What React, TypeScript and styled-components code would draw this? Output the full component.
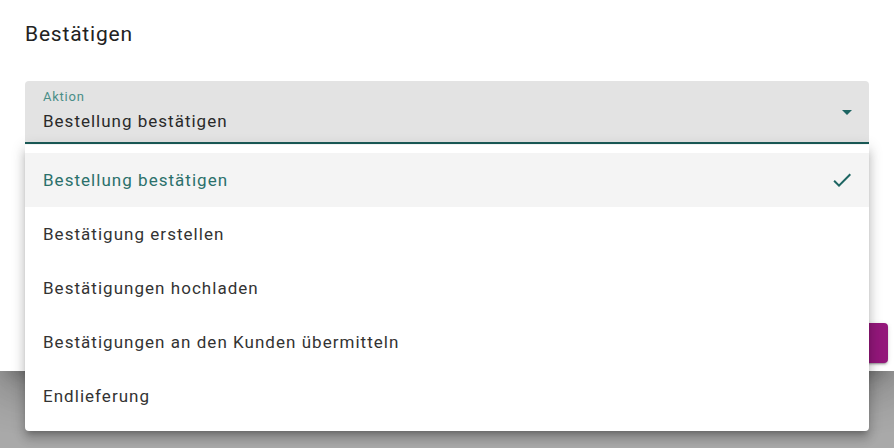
import React from "react";
import styled, { createGlobalStyle } from "styled-components";

const Global = createGlobalStyle`
  html, body { margin: 0; padding: 0; }
  body {
    width: 894px;
    height: 448px;
    overflow: hidden;
    font-family: Roboto, "Noto Sans", "Liberation Sans", sans-serif;
    background: #a9a9a9;
  }
`;

const Screen = styled.div`
  position: relative;
  width: 894px;
  height: 448px;
  background: #a9a9a9;
`;

const Dialog = styled.div`
  width: 894px;
  height: 371px;
  background: #ffffff;
  display: flex;
  flex-direction: column;
  box-sizing: border-box;
  box-shadow: 0 11px 15px -7px rgba(0,0,0,0.2), 0 24px 38px 3px rgba(0,0,0,0.14), 0 9px 46px 8px rgba(0,0,0,0.12);
`;

const Title = styled.h2`
  margin: 0;
  padding: 16px 24px 0 25px;
  font-size: 21px;
  line-height: 36px;
  font-weight: 400;
  color: #222222;
  letter-spacing: 0.8px;
`;

const Content = styled.div`
  padding: 29px 25px 0 25px;
`;

const Field = styled.div`
  position: relative;
  height: 63px;
  box-sizing: border-box;
  background: #e3e3e3;
  border-radius: 4px 4px 0 0;
  border-bottom: 2px solid #1a5b58;
  padding: 8px 18px 0 18px;
  display: flex;
  flex-direction: column;
`;

const Label = styled.span`
  font-size: 13px;
  line-height: 16px;
  color: #4a8e88;
  letter-spacing: 0.75px;
`;

const Value = styled.span`
  margin-top: 4px;
  font-size: 17px;
  line-height: 24px;
  color: #2a2a2a;
  letter-spacing: 1px;
`;

const Arrow = styled.span`
  position: absolute;
  right: 17px;
  top: 29px;
  width: 0;
  height: 0;
  border-left: 5px solid transparent;
  border-right: 5px solid transparent;
  border-top: 5px solid #1d6562;
`;

const Actions = styled.div`
  margin-top: auto;
  display: flex;
  justify-content: flex-end;
  padding: 0 6px 8px 0;
`;

const PrimaryButton = styled.button`
  width: 120px;
  height: 40px;
  border: none;
  border-radius: 4px;
  background: #93177a;
  color: #fff;
  font-family: inherit;
  box-shadow: 0 3px 1px -2px rgba(0,0,0,0.2), 0 2px 2px 0 rgba(0,0,0,0.14), 0 1px 5px 0 rgba(0,0,0,0.12);
`;

const Menu = styled.ul`
  position: absolute;
  top: 145px;
  left: 25px;
  width: 844px;
  margin: 0;
  padding: 8px 0;
  list-style: none;
  background: #ffffff;
  border-radius: 0 0 4px 4px;
  box-shadow: 0 5px 5px -3px rgba(0,0,0,0.2), 0 8px 10px 1px rgba(0,0,0,0.14), 0 3px 14px 2px rgba(0,0,0,0.12);
`;

const Item = styled.li<{ $selected?: boolean }>`
  height: 54px;
  display: flex;
  align-items: center;
  justify-content: space-between;
  padding: 0 15px 0 18px;
  font-size: 17px;
  letter-spacing: 1.03px;
  color: ${(p) => (p.$selected ? "#2b706b" : "#333333")};
  background: ${(p) => (p.$selected ? "#f4f4f4" : "transparent")};
`;

const Check = () => (
  <svg width="24" height="24" viewBox="0 0 24 24" aria-hidden="true">
    <path d="M9 16.17L4.83 12l-1.42 1.41L9 19 21 7l-1.41-1.41z" fill="#1d6562" />
  </svg>
);

const options = [
  "Bestellung bestätigen",
  "Bestätigung erstellen",
  "Bestätigungen hochladen",
  "Bestätigungen an den Kunden übermitteln",
  "Endlieferung",
];

export default function App() {
  return (
    <Screen>
      <Global />
      <Dialog>
        <Title>Bestätigen</Title>
        <Content>
          <Field>
            <Label>Aktion</Label>
            <Value>Bestellung bestätigen</Value>
            <Arrow />
          </Field>
        </Content>
        <Actions>
          <PrimaryButton />
        </Actions>
      </Dialog>
      <Menu>
        {options.map((o, i) => (
          <Item key={o} $selected={i === 0}>
            <span>{o}</span>
            {i === 0 && <Check />}
          </Item>
        ))}
      </Menu>
    </Screen>
  );
}
